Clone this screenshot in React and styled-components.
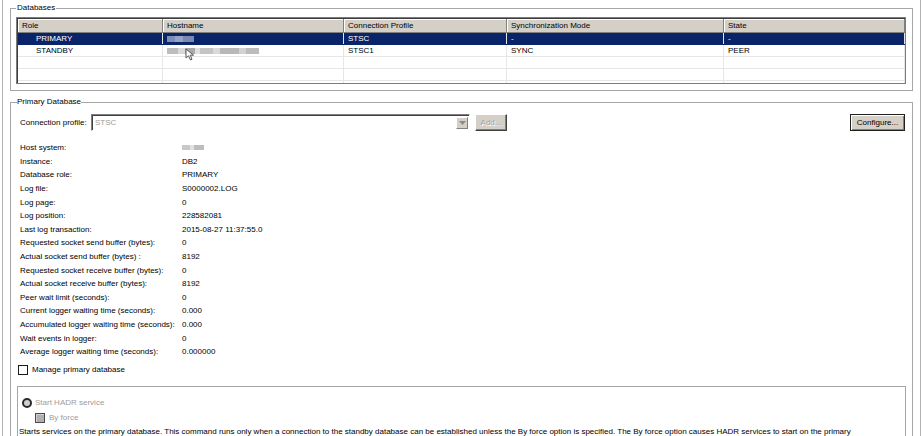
import React from "react";
import styled, { createGlobalStyle } from "styled-components";

const GlobalStyle = createGlobalStyle`
  html, body {
    margin: 0;
    padding: 0;
    background: #fff;
  }
  body {
    font-family: "Liberation Sans", Arial, sans-serif;
    font-size: 8px;
    color: #000;
  }
`;

const columns = "145px 181px 163px 217px 1fr";

const rows = [
	{ role: "PRIMARY", host: "primary", profile: "STSC", mode: "-", state: "-", selected: true },
	{ role: "STANDBY", host: "standby", profile: "STSC1", mode: "SYNC", state: "PEER" },
	{},
	{},
	{},
];

const details = [
	["Host system:", null],
	["Instance:", "DB2"],
	["Database role:", "PRIMARY"],
	["Log file:", "S0000002.LOG"],
	["Log page:", "0"],
	["Log position:", "228582081"],
	["Last log transaction:", "2015-08-27 11:37:55.0"],
	["Requested socket send buffer (bytes):", "0"],
	["Actual socket send buffer (bytes) :", "8192"],
	["Requested socket receive buffer (bytes):", "0"],
	["Actual socket receive buffer (bytes):", "8192"],
	["Peer wait limit (seconds):", "0"],
	["Current logger waiting time (seconds):", "0.000"],
	["Accumulated logger waiting time (seconds):", "0.000"],
	["Wait events in logger:", "0"],
	["Average logger waiting time (seconds):", "0.000000"],
];

function App() {
	return (
		<>
			<GlobalStyle />
			<Frame>
				<Group $pad="4px 6px 6px 5px">
					<Legend $pad={1}>Databases</Legend>
					<Table>
						<HeaderRow>
							<HeaderCell>Role</HeaderCell>
							<HeaderCell>Hostname</HeaderCell>
							<HeaderCell>Connection Profile</HeaderCell>
							<HeaderCell>Synchronization Mode</HeaderCell>
							<HeaderCell>State</HeaderCell>
						</HeaderRow>
						<Body>
							{rows.map((r, i) => (
								<Row key={i} $selected={r.selected}>
									<Cell $indent>{r.role}</Cell>
									<Cell>
										{r.host === "primary" && <Blur $w={27} $c="linear-gradient(90deg,#7d8db5 0 30%,#97a3c4 30% 60%,#7a89b0 60%)" />}
										{r.host === "standby" && (
											<>
												<Blur
													$w={92}
													$c="linear-gradient(90deg,#bdbdbd 0 12%,#d9d9d9 12% 20%,#a9a9a9 20% 30%,#e0e0e0 30% 36%,#c4c4c4 36% 50%,#dadada 50% 58%,#b8b8b8 58% 78%,#d2d2d2 78% 86%,#bcbcbc 86%)"
												/>
												<Cursor width="10" height="13" viewBox="0 0 10 13">
													<path d="M1 1 L1 10 L3.5 7.8 L5.5 12 L7 11.3 L5.2 7.2 L8.5 7.2 Z" fill="#fff" stroke="#555" strokeWidth="1" strokeLinejoin="round" />
												</Cursor>
											</>
										)}
									</Cell>
									<Cell>{r.profile}</Cell>
									<Cell>{r.mode}</Cell>
									<Cell>{r.state}</Cell>
								</Row>
							))}
						</Body>
					</Table>
				</Group>

				<Group $top={6} $pad="6px 6px 0 6px">
					<Legend>Primary Database</Legend>
					<ConnRow>
						<ConnLabel>Connection profile:</ConnLabel>
						<Combo>
							<ComboText>STSC</ComboText>
							<ComboArrow>
								<svg width="7" height="4" viewBox="0 0 7 4">
									<path d="M0 0 H7 L3.5 4 Z" fill="#8a8a8a" />
								</svg>
							</ComboArrow>
						</Combo>
						<Button disabled $w={32}>Add...</Button>
						<Spacer />
						<Button $w={55} $default>Configure...</Button>
					</ConnRow>

					<Details>
						{details.map(([label, value]) => (
							<React.Fragment key={label}>
								<DetailLabel>{label}</DetailLabel>
								<DetailValue>
									{value === null ? (
										<Blur $w={22} $h={5} $c="linear-gradient(90deg,#c8c8c8 0 35%,#e2e2e2 35% 55%,#bdbdbd 55%)" />
									) : (
										value
									)}
								</DetailValue>
							</React.Fragment>
						))}
					</Details>

					<CheckRow $top={5} $left={1}>
						<CheckBox />
						<span>Manage primary database</span>
					</CheckRow>

					<Inner>
						<CheckRow $left={3} $disabled>
							<Radio />
							<span>Start HADR service</span>
						</CheckRow>
						<CheckRow $top={3} $left={16} $disabled>
							<CheckBox $disabled />
							<span>By force</span>
						</CheckRow>
						<Description>
							Starts services on the primary database. This command runs only when a connection to the standby
							database can be established unless the By force option is specified. The By force option causes HADR
							services to start on the primary database even if a connection cannot be established.
						</Description>
					</Inner>
				</Group>
			</Frame>
		</>
	);
}

export default App;

const Frame = styled.div`
	box-sizing: border-box;
	width: 919px;
	height: 436px;
	margin-left: 2px;
	padding: 3px 7px 0 7px;
	border-left: 1px solid #b4b4b4;
	border-right: 1px solid #b4b4b4;
	overflow: hidden;
`;

const Group = styled.fieldset`
	margin: ${(p) => p.$top || 0}px 0 0;
	padding: ${(p) => p.$pad};
	border: 1px solid #a6a6a6;
	min-width: 0;
`;

const Legend = styled.legend`
	padding: 0 ${(p) => p.$pad || 0}px;
	margin: 0;
	line-height: 10px;
	color: #000;
`;

const Table = styled.div`
	border: 1px solid #7c7c7c;
	box-shadow: inset 1px 1px 0 #3c3c3c;
	padding: 1px 0 0 1px;
	background: #fff;
	height: 64px;
	overflow: hidden;
`;

const HeaderRow = styled.div`
	display: grid;
	grid-template-columns: ${columns};
	height: 14px;
	border-bottom: 1px solid #808080;
	box-sizing: border-box;
`;

const HeaderCell = styled.div`
	background: #d4d0c8;
	border-right: 1px solid #808080;
	box-shadow: inset 1px 1px 0 #fff;
	padding-left: 4px;
	line-height: 13px;
	white-space: nowrap;
	overflow: hidden;
`;

const Body = styled.div`
	height: 51px;
	overflow: hidden;
`;

const Row = styled.div`
	display: grid;
	grid-template-columns: ${columns};
	height: 12px;
	box-sizing: border-box;
	border-bottom: 1px solid ${(p) => (p.$selected ? "#0a246a" : "#e6e6e6")};
	background: ${(p) => (p.$selected ? "#0a246a" : "#fff")};
	color: ${(p) => (p.$selected ? "#fff" : "#000")};
`;

const Cell = styled.div`
	position: relative;
	display: flex;
	align-items: center;
	padding-left: ${(p) => (p.$indent ? 18 : 4)}px;
	border-right: 1px solid #e6e6e6;
	line-height: 11px;
	white-space: nowrap;
`;

const Blur = styled.span`
	display: inline-block;
	width: ${(p) => p.$w}px;
	height: ${(p) => p.$h || 6}px;
	background: ${(p) => p.$c};
	filter: blur(0.7px);
	vertical-align: middle;
`;

const Cursor = styled.svg`
	position: absolute;
	left: 22px;
	top: 3px;
	filter: blur(0.4px);
	z-index: 2;
`;

const ConnRow = styled.div`
	display: flex;
	align-items: center;
	height: 18px;
`;

const ConnLabel = styled.span`
	width: 71px;
	margin-left: 3px;
	white-space: nowrap;
`;

const Combo = styled.div`
	display: flex;
	box-sizing: border-box;
	width: 379px;
	height: 17px;
	border: 1px solid;
	border-color: #808080 #ffffff #ffffff #808080;
	box-shadow: inset 1px 1px 0 #404040;
	background: #fff;
	padding: 2px 1px 1px 2px;
`;

const ComboText = styled.span`
	flex: 1;
	color: #9a9a9a;
	padding-left: 1px;
	line-height: 12px;
`;

const ComboArrow = styled.span`
	display: flex;
	align-items: center;
	justify-content: center;
	box-sizing: border-box;
	width: 12px;
	background: #d4d0c8;
	border: 1px solid;
	border-color: #fff #808080 #808080 #fff;
`;

const Button = styled.button`
	box-sizing: border-box;
	width: ${(p) => p.$w}px;
	height: 17px;
	margin-left: 5px;
	padding: 0;
	font: inherit;
	background: #d4d0c8;
	color: ${(p) => (p.disabled ? "#a0a0a0" : "#000")};
	text-shadow: ${(p) => (p.disabled ? "1px 1px 0 #fff" : "none")};
	border: 1px solid;
	border-color: ${(p) => (p.$default ? "#202020" : "#fff #404040 #404040 #fff")};
	box-shadow: ${(p) => (p.$default ? "inset 1px 1px 0 #fff, inset -1px -1px 0 #808080" : "inset -1px -1px 0 #808080")};
	margin-right: ${(p) => (p.$default ? 1 : 0)}px;
`;

const Spacer = styled.div`
	flex: 1;
`;

const Details = styled.div`
	display: grid;
	grid-template-columns: 162px 1fr;
	grid-auto-rows: 13.6px;
	align-items: center;
	margin-top: 10px;
	padding-left: 3px;
	white-space: nowrap;
`;

const DetailLabel = styled.span``;

const DetailValue = styled.span`
	display: flex;
	align-items: center;
`;

const CheckRow = styled.div`
	display: flex;
	align-items: center;
	gap: 4px;
	height: 12px;
	margin-top: ${(p) => p.$top || 0}px;
	margin-left: ${(p) => p.$left || 0}px;
	color: ${(p) => (p.$disabled ? "#9c9c9c" : "#000")};
`;

const CheckBox = styled.span`
	box-sizing: border-box;
	width: 10px;
	height: 10px;
	border: ${(p) => (p.$disabled ? "1px solid #4a4a4a" : "1.5px solid #1a1a1a")};
	background: ${(p) => (p.$disabled ? "#b0b0b0" : "#fff")};
	box-shadow: ${(p) => (p.$disabled ? "inset 1px 1px 0 #d0d0d0" : "none")};
`;

const Radio = styled.span`
	box-sizing: border-box;
	width: 10px;
	height: 10px;
	border-radius: 50%;
	border: 2px solid #2a2a2a;
	background: #d0d0d0;
	margin-right: -1px;
`;

const Inner = styled.div`
	margin-top: 10px;
	border: 1px solid #a6a6a6;
	border-bottom: none;
	padding: 10px 0 0 1px;
`;

const Description = styled.div`
	margin-top: 2px;
	padding-right: 20px;
	line-height: 12px;
`;
